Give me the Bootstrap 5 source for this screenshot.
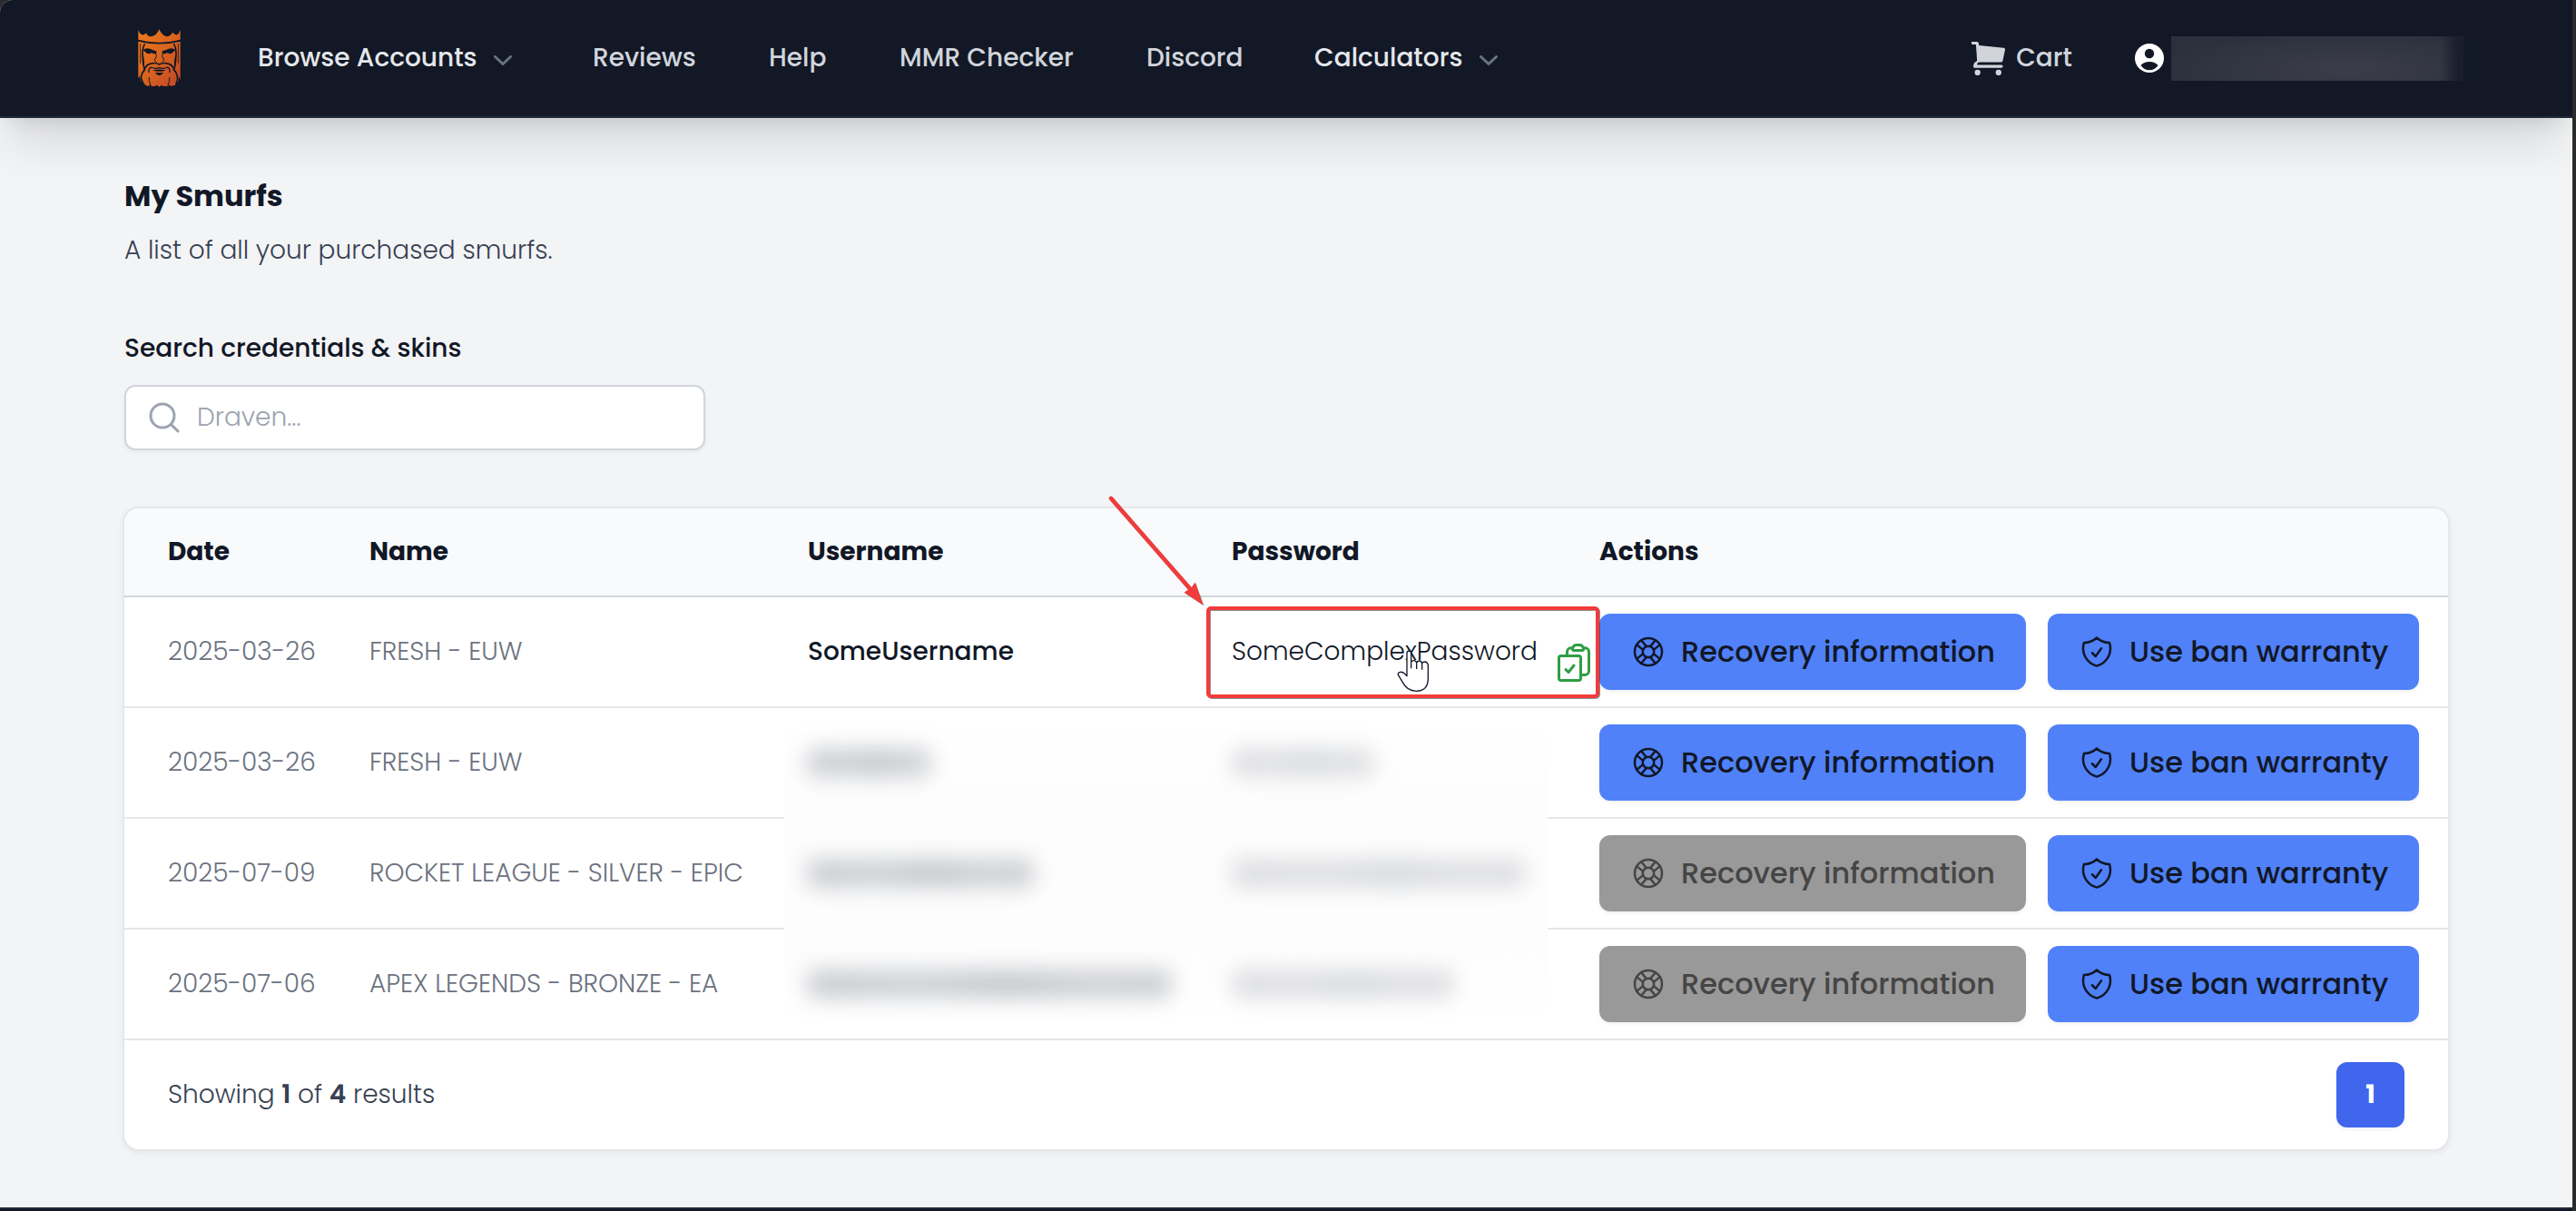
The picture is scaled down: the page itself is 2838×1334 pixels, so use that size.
<!DOCTYPE html>
<html lang="en">
<head>
<meta charset="utf-8">
<meta name="viewport" content="width=device-width, initial-scale=1">
<title>My Smurfs</title>
<link rel="stylesheet" href="https://cdn.jsdelivr.net/npm/bootstrap@5.3.0/dist/css/bootstrap.min.css">
<style>
  html { background: #292929; }
  body { margin: 0; background: #2b2b2b; font-family: Poppins, Inter, "Noto Sans", sans-serif; font-size: 28px; line-height: 40px; font-weight: 300; color: #111827; overflow: hidden; }
  svg { display: block; flex: none; }
  .stage { width: 2834px; height: 1334px; background: #f3f4f6; border-top-left-radius: 14px; overflow: hidden; }
  .topnav { height: 130px; background: #121826; border-bottom: 2px solid #1f2937; padding: 0 120px 0 152px; flex-wrap: nowrap; box-shadow: 0 40px 50px -10px rgba(0,0,0,.1), 0 16px 20px -12px rgba(0,0,0,.1); font-weight: 500; color: #d1d5db; }
  .topnav a { color: inherit; text-decoration: none; white-space: nowrap; flex: none; padding: 0; }
  .topnav .lit { color: #e5e7eb; }
  .n-browse { width: 280px; margin-left: 85px; }
  .n-reviews { width: 120px; margin-left: 89px; }
  .n-help { width: 69px; margin-left: 74px; }
  .n-mmr { width: 194px; margin-left: 75px; }
  .n-discord { width: 110px; margin-left: 78px; }
  .n-calc { width: 202px; margin-left: 75px; }
  .n-cart { gap: 12px; }
  .redacted { width: 322px; height: 49px; margin-left: 8px; background: linear-gradient(90deg, rgba(20,23,38,0) 92%, #1b1e2d 98%), radial-gradient(ellipse 65% 90% at 60% 75%, #3b3e49, #2c303d); }
  .content { padding: 66px 135px 0 137px; }
  .title { font-size: 32px; line-height: 40px; font-weight: 700; margin: 0 0 20px; }
  .intro { color: #374151; margin: 0 0 68px; }
  .srch-label { font-weight: 500; margin: 0 0 20px; display: block; }
  .srch { width: 640px; height: 72px; background: #fff; border: 2px solid #d1d5db; border-radius: 12px; padding: 0 26px 0 25px; box-shadow: 0 2px 4px rgba(0,0,0,.05); }
  .srch input { border: 0; padding: 0; margin-left: 19px; font-size: 28px; font-weight: 300; width: 500px; outline: 0; background: transparent; }
  .srch input::placeholder { color: #9ca3af; opacity: 1; }
  .panel { position: relative; width: 2564px; margin: 62px 0 0 -2px; background: #fff; border: 2px solid #e5e7eb; border-radius: 18px; box-shadow: 0 2px 6px rgba(0,0,0,.06); }
  .smurfs { width: 2560px; margin: 0; table-layout: fixed; border-collapse: separate; border-spacing: 0; --bs-table-bg: transparent; font-size: 28px; }
  .smurfs > :not(caption) > * > * { padding: 0; vertical-align: middle; border-bottom: 2px solid #e5e7eb; white-space: nowrap; color: #6b7280; background: transparent; box-shadow: none; }
  .smurfs > thead > tr > th { height: 98px; background: #f9fafb; border-bottom-color: #d1d5db; color: #111827; font-weight: 700; }
  .smurfs > tbody > tr > td { height: 122px; }
  .smurfs th:first-child, .smurfs td:first-child { padding-left: 48px !important; }
  .smurfs th:first-child { border-top-left-radius: 16px; }
  .smurfs th:last-child { border-top-right-radius: 16px; }
  .smurfs .uname { color: #111827 !important; font-weight: 500; }
  .smurfs .pword { color: #111827 !important; }
  .act { height: 84px; border: 0; border-radius: 12px; background: #5081f9; color: #111827; font-size: 32px; font-weight: 500; padding: 0 0 0 34px; gap: 16px; box-shadow: 0 2px 4px rgba(0,0,0,.06); }
  .act:disabled { background: #999; color: #454545; opacity: 1; }
  .act-rec { width: 470px; }
  .act-ban { width: 409px; }
  .foot { height: 120px; padding: 0 48px 0 48px; color: #374151; }
  .foot b { font-weight: 600; }
  .pg { width: 75px; height: 72px; border-radius: 12px; background: #4066ee; color: #fff; font-weight: 700; box-shadow: 0 2px 4px rgba(0,0,0,.06); }
  /* blurred credentials lying over the table */
  .veil { position: absolute; left: 727px; top: 237px; width: 841px; height: 325px; background: linear-gradient(#fff, #fdfdfd 25%, #fdfdfd 75%, #fff); overflow: hidden; display: grid; grid-template: repeat(3, 122px) / 468px 1fr; padding-left: 26px; margin: 0; align-items: center; align-content: start; }
  .veil i { height: 30px; background: linear-gradient(90deg, #c6c8cd, #cccfd3 30%, #c3c5ca 55%, #cdcfd3 80%, #c8cace); border-radius: 8px; filter: blur(12px); position: relative; top: -18px; display: block; }
  .veil i:nth-child(even) { background: linear-gradient(90deg, #dadbde, #dedfe2 30%, #d6d8db 55%, #dedfe2 80%, #dbdcdf); }
  .bottombar { height: 4px; background: #111827; border-top: 2px solid #1f2937; margin-top: auto; }
  .notes { position: absolute; left: 0; top: 0; pointer-events: none; }
  .copy { position: absolute; left: 1573px; top: 146px; }
</style>
<script src="https://cdn.jsdelivr.net/npm/bootstrap@5.3.0/dist/js/bootstrap.bundle.min.js"></script>
</head>
<body>
<svg width="0" height="0" style="position:absolute">
  <symbol id="ring" viewBox="0 0 24 24"><g fill="none" stroke="currentColor" stroke-width="1.5" stroke-linecap="round"><circle cx="12" cy="12" r="9"/><circle cx="12" cy="12" r="3.75"/><path d="M16.71 4.33l-3.45 4.14M19.67 7.29l-4.14 3.45M19.67 16.71l-4.14-3.45M16.71 19.67l-3.45-4.14M7.29 19.67l3.45-4.14M4.33 16.71l4.14-3.45M4.33 7.29l4.14 3.45M7.29 4.33l3.45 4.14"/></g></symbol>
  <symbol id="shield" viewBox="0 0 24 24"><path fill="none" stroke="currentColor" stroke-width="1.5" stroke-linecap="round" stroke-linejoin="round" d="M9 12.75 11.25 15 15 9.75m-3-7.036A11.959 11.959 0 0 1 3.598 6 11.99 11.99 0 0 0 3 9.749c0 5.592 3.824 10.29 9 11.623 5.176-1.332 9-6.03 9-11.622 0-1.31-.21-2.571-.598-3.751h-.152c-3.196 0-6.1-1.248-8.25-3.285Z"/></symbol>
  <symbol id="chev" viewBox="0 0 20 11"><path d="M1.5 1.5 10 9.5 18.500 1.500" fill="none" stroke="#6b7280" stroke-width="3" stroke-linecap="round" stroke-linejoin="round"/></symbol>
</svg>

<div class="stage d-flex flex-column">
  <nav class="topnav d-flex align-items-center">
    <a href="#" aria-label="Home">
      <svg width="47" height="64" viewBox="35 36 142 192">
        <defs><linearGradient id="fire" x1="0" y1="0" x2="1" y2="1"><stop offset="0" stop-color="#ee7a1c"/><stop offset=".5" stop-color="#d9641f"/><stop offset="1" stop-color="#bf4526"/></linearGradient></defs>
        <path fill="url(#fire)" d="M36 38Q42 53 51 55Q58 54 62 48Q67 60 78 60Q97 58 106 36Q115 58 132 60Q144 59 150 47Q156 54 163 55Q172 52 176 37V71Q106 89 36 71ZM36 77Q106 94 176 77V206L171 192 168 212 163 202 159 222 150 224 144 226 140 221 134 226H118L114 222 106 228 98 222 92 226H80L74 221 68 226 60 222 54 214 49 200 44 209 41 190 36 200Z"/>
        <g fill="none" stroke="#121826" stroke-width="5" stroke-linejoin="round">
          <path d="M58 84Q50 96 50 122Q51 148 57 172Q46 180 45 205M154 84Q162 96 162 122Q161 148 155 172Q166 180 167 205"/>
          <path d="M57 172Q60 152 84 149Q96 147 106 153Q116 147 128 149Q152 152 155 172"/>
          <path d="M72 180Q68 165 80 163Q92 169 106 164Q120 169 132 163Q144 165 140 180" stroke-width="4"/>
          <path d="M43 84V150M169 84V150" stroke-width="2.500"/>
          <path d="M72 196Q70 208 78 224M140 196Q142 208 134 224" stroke-width="3"/>
          <path d="M93 117L97 124 90 139 97 146M119 117L115 124 122 139 115 146" stroke-width="3"/>
        </g>
        <g fill="#121826">
          <path d="M52 105Q62 97 74 101L97 109 96 118Q84 118 80 115Q68 121 60 112ZM160 105Q150 97 138 101L115 109 116 118Q128 118 132 115Q144 121 152 112Z"/>
          <path d="M84 172Q106 168 128 172Q118 178 106 176Q94 178 84 172ZM92 180H120Q114 190 106 190Q98 190 92 180Z"/>
          <path d="M52 116Q58 140 55 165L50 150ZM160 116Q154 140 157 165L162 150Z"/>
        </g>
      </svg>
    </a>
    <a href="#" class="n-browse lit d-flex align-items-center justify-content-between">Browse Accounts <svg width="20" height="11" class="mt-1"><use href="#chev"/></svg></a>
    <a href="#" class="n-reviews">Reviews</a>
    <a href="#" class="n-help">Help</a>
    <a href="#" class="n-mmr">MMR Checker</a>
    <a href="#" class="n-discord">Discord</a>
    <a href="#" class="n-calc lit d-flex align-items-center justify-content-between">Calculators <svg width="20" height="11" class="mt-1"><use href="#chev"/></svg></a>
    <a href="#" class="n-cart d-flex align-items-center ms-auto">
      <svg width="37" height="37" viewBox="0 0 36 36" fill="currentColor"><path d="M0 0H6Q7.500 0 7.800 2L8 4 34.500 6.500Q36.200 6.800 36 8.500L33.500 20.500Q33.200 22 31.500 22H9Q6 22.300 6 24.700H32Q33.700 24.800 33.700 26.300T32 28H3.500Q2 28 2 26.500Q2 22.500 6 20.500L4.800 3H1.500Q0 3 0 1.500Z"/><circle cx="6.500" cy="33" r="3.100"/><circle cx="29" cy="33" r="3.100"/></svg>
      Cart</a>
    <a href="#" style="margin-left:69px" aria-label="Account"><svg width="32" height="32" viewBox="0 0 32 32"><circle cx="16" cy="16" r="16" fill="#fff"/><circle cx="16" cy="11" r="5.200" fill="#121826"/><path d="M6.500 24Q10 20 16 20T25.500 24Q22 29.300 16 29.300T6.500 24Z" fill="#121826"/></svg></a>
    <div class="redacted"></div>
  </nav>

  <main class="content">
    <h1 class="title">My Smurfs</h1>
    <p class="intro">A list of all your purchased smurfs.</p>
    <label class="srch-label" for="q">Search credentials &amp; skins</label>
    <div class="srch d-flex align-items-center">
      <svg width="34" height="34" viewBox="0 0 34 34" fill="none" stroke="#9ca3af" stroke-width="3" stroke-linecap="round"><circle cx="15" cy="15" r="13"/><path d="M24.500 24.500 32 32"/></svg>
      <input id="q" type="text" placeholder="Draven...">
    </div>

    <section class="panel">
      <table class="table smurfs">
        <colgroup><col style="width:270px"><col style="width:483px"><col style="width:467px"><col style="width:405px"><col style="width:935px"></colgroup>
        <thead><tr><th>Date</th><th>Name</th><th>Username</th><th>Password</th><th>Actions</th></tr></thead>
        <tbody>
          <tr><td>2025-03-26</td><td>FRESH - EUW</td><td class="uname">SomeUsername</td><td class="pword">SomeComplexPassword</td>
            <td><div class="d-flex gap-4"><button class="btn act act-rec d-flex align-items-center"><svg width="40" height="40"><use href="#ring"/></svg>Recovery information</button><button class="btn act act-ban d-flex align-items-center"><svg width="40" height="40"><use href="#shield"/></svg>Use ban warranty</button></div></td></tr>
          <tr><td>2025-03-26</td><td>FRESH - EUW</td><td></td><td></td>
            <td><div class="d-flex gap-4"><button class="btn act act-rec d-flex align-items-center"><svg width="40" height="40"><use href="#ring"/></svg>Recovery information</button><button class="btn act act-ban d-flex align-items-center"><svg width="40" height="40"><use href="#shield"/></svg>Use ban warranty</button></div></td></tr>
          <tr><td>2025-07-09</td><td>ROCKET LEAGUE - SILVER - EPIC</td><td></td><td></td>
            <td><div class="d-flex gap-4"><button class="btn act act-rec d-flex align-items-center" disabled><svg width="40" height="40"><use href="#ring"/></svg>Recovery information</button><button class="btn act act-ban d-flex align-items-center"><svg width="40" height="40"><use href="#shield"/></svg>Use ban warranty</button></div></td></tr>
          <tr><td>2025-07-06</td><td>APEX LEGENDS - BRONZE - EA</td><td></td><td></td>
            <td><div class="d-flex gap-4"><button class="btn act act-rec d-flex align-items-center" disabled><svg width="40" height="40"><use href="#ring"/></svg>Recovery information</button><button class="btn act act-ban d-flex align-items-center"><svg width="40" height="40"><use href="#shield"/></svg>Use ban warranty</button></div></td></tr>
        </tbody>
      </table>
      <div class="veil" aria-hidden="true">
        <i style="width:134px"></i><i style="width:155px"></i>
        <i style="width:248px"></i><i style="width:322px"></i>
        <i style="width:400px"></i><i style="width:243px"></i>
      </div>
      <svg class="copy" width="48" height="48" viewBox="0 0 24 24" fill="none" stroke="#2f9e44" stroke-width="1.500" stroke-linecap="round" stroke-linejoin="round"><path d="M11.350 3.836c-.065.21-.1.433-.1.664 0 .414.336.75.75.75h4.500a.75.75 0 0 0 .75-.75 2.250 2.250 0 0 0-.1-.664m-5.800 0A2.251 2.251 0 0 1 13.500 2.250H15c1.012 0 1.867.668 2.150 1.586m-5.800 0c-.376.023-.75.05-1.124.08C9.095 4.010 8.250 4.973 8.250 6.108V8.250m8.900-4.414c.376.023.75.05 1.124.08 1.131.094 1.976 1.057 1.976 2.192V16.500A2.250 2.250 0 0 1 18 18.750h-2.250m-7.500-10.500H4.875c-.621 0-1.125.504-1.125 1.125v11.250c0 .621.504 1.125 1.125 1.125h9.750c.621 0 1.125-.504 1.125-1.125V18.750m-7.500-10.500h6.375c.621 0 1.125.504 1.125 1.125v9.375m-8.250-3 1.500 1.500 3-3.750"/></svg>
      <div class="foot d-flex align-items-center justify-content-between">
        <div>Showing <b>1</b> of <b>4</b> results</div>
        <a href="#" class="pg d-flex align-items-center justify-content-center text-decoration-none">1</a>
      </div>
    </section>
  </main>
  <div class="bottombar"></div>
</div>

<!-- arrow, highlight frame and hand pointer drawn over the page -->
<svg class="notes" width="2838" height="1334" viewBox="0 0 2838 1334">
  <g style="filter:drop-shadow(1px 1px 0 rgba(70,70,70,.6))">
    <path d="M1224 549 1314 652" stroke="#f23b3b" stroke-width="4.500" stroke-linecap="round"/>
    <path d="M1325.500 666.500 1316.500 641.500 1312 648 1304.500 652.500Z" fill="#f23b3b"/>
    <rect x="1331" y="670" width="429" height="97" rx="3" fill="none" stroke="#f23b3b" stroke-width="4"/>
  </g>
  <path transform="translate(1520 660) scale(.33333)" d="M90 254V179Q91 171 97 171T104 179V208Q106 203 113 203T122 210Q125 204 131 204T140 212Q143 207 150 207T160 217V262Q160 304 121 304Q90 303 76 275L61 250Q60 241 68 241Q76 240 82 246ZM104 205V229M122 208V231M140 210V233" fill="#fff" stroke="#14182b" stroke-width="4" stroke-linejoin="round"/>
</svg>
</body>
</html>
